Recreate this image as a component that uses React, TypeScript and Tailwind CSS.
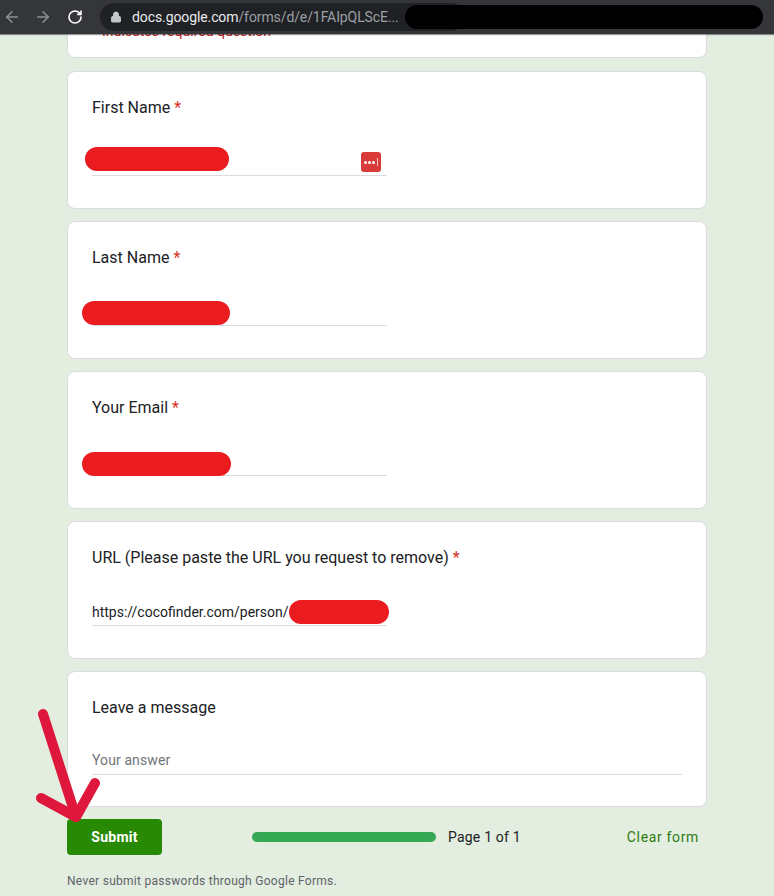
import React from "react";
import { ArrowLeft, ArrowRight, RotateCw, Lock } from "lucide-react";

function Blob({ className }: { className: string }) {
  return <div className={"absolute h-6 rounded-full bg-[#ea1c1f] " + className} />;
}

function Question({ title, required, children, last }: { title: string; required?: boolean; children: React.ReactNode; last?: boolean }) {
  return (
    <section className={"rounded-lg border border-[#dadce0] bg-white px-6 pt-6 " + (last ? "h-[136px]" : "h-[138px]")}>
      <div className="h-6 text-base leading-6 text-[#202124]">
        {title}
        {required && <span className="text-[#d93025]"> *</span>}
      </div>
      {children}
    </section>
  );
}

function Line({ children, wide }: { children?: React.ReactNode; wide?: boolean }) {
  return (
    <div className={"relative mt-[18px] border-b border-[#dadce0] " + (wide ? "h-[37px] w-[590px]" : "h-[38px] w-[295px]")}>
      {children}
    </div>
  );
}

export default function App() {
  return (
    <div className="relative flex h-[896px] w-[774px] flex-col overflow-hidden bg-[#e3ede0] font-['Roboto',sans-serif]">
      <header className="z-10 flex h-[34px] shrink-0 items-center bg-[#35363a] shadow-[0_1px_1px_rgba(0,0,0,0.4)]">
        <div className="flex w-[100px] items-center pl-[3px]">
          <ArrowLeft size={18} className="text-[#8f9195]" />
          <ArrowRight size={18} className="ml-[13px] text-[#8f9195]" />
          <RotateCw size={16} className="ml-[15px] text-white" strokeWidth={2.4} />
        </div>
        <div className="relative flex h-[28px] w-[365px] items-center rounded-full bg-[#202124] pl-[10px]">
          <Lock size={12} className="text-[#c4c6ca]" fill="#c4c6ca" />
          <div className="ml-[10px] whitespace-nowrap text-[14px] tracking-[-0.1px] text-[#9aa0a6]">
            <span className="text-[#e8eaed]">docs.google.com</span>/forms/d/e/1FAIpQLScE...
          </div>
        </div>
      </header>
      <div className="absolute left-[405px] top-[5px] z-20 h-[24px] w-[358px] rounded-full bg-black" />

      <main className="ml-[67px] flex w-[640px] flex-col">
        <div className="relative mb-[13px] h-[24px] overflow-hidden rounded-b-lg border-b border-x border-[#dadce0] bg-white">
          <div className="absolute left-[34px] top-[-13px] text-[14px] leading-5 text-[#c5221f]">Indicates required question</div>
        </div>

        <div className="flex flex-col gap-3">
          <Question title="First Name" required>
            <Line>
              <Blob className="left-[-7px] top-[9px] w-[144px]" />
              <div className="absolute left-[269px] top-[14px] flex h-5 w-5 items-center justify-center gap-[1px] rounded-[3px] bg-[#d93a3a]">
                <i className="h-[3px] w-[3px] rounded-full bg-white" />
                <i className="h-[3px] w-[3px] rounded-full bg-white" />
                <i className="h-[3px] w-[3px] rounded-full bg-white" />
                <i className="ml-[1px] h-[8px] w-[1.5px] bg-[#f4c7c7]" />
              </div>
            </Line>
          </Question>
          <Question title="Last Name" required>
            <Line>
              <Blob className="left-[-10px] top-[13px] w-[148px]" />
            </Line>
          </Question>
          <Question title="Your Email" required>
            <Line>
              <Blob className="left-[-10px] top-[14px] w-[149px]" />
            </Line>
          </Question>
          <Question title="URL (Please paste the URL you request to remove)" required>
            <Line>
              <div className="pt-[14px] text-sm leading-5 text-[#202124]">https://cocofinder.com/person/</div>
              <Blob className="left-[197px] top-[12px] w-[100px]" />
            </Line>
          </Question>
          <Question title="Leave a message" last>
            <Line wide>
              <div className="pt-[12px] text-sm leading-5 tracking-[0.1px] text-[#70757a]">Your answer</div>
            </Line>
          </Question>
        </div>

        <div className="mt-3 flex h-9 items-center">
          <button className="h-9 w-[95px] rounded bg-[#288a04] text-sm font-bold tracking-[0.25px] text-white">Submit</button>
          <div className="ml-[90px] h-[10px] w-[184px] rounded-full bg-[#34a853]" />
          <div className="ml-3 text-sm tracking-[0.2px] text-[#202124]">Page 1 of 1</div>
          <div className="ml-auto mr-2 text-sm tracking-[0.65px] text-[#2f7d12]">Clear form</div>
        </div>

        <div className="mt-[18px] text-xs leading-4 tracking-[0.28px] text-[#5f6368]">Never submit passwords through Google Forms.</div>
      </main>

      <svg className="absolute left-[30px] top-[700px] z-20" width="80" height="130" viewBox="0 0 80 130" fill="none" stroke="#e0173c" strokeWidth="10" strokeLinecap="round" strokeLinejoin="round">
        <path d="M13 14 L46 117" />
        <path d="M11 98 L46 117 L65 83" />
      </svg>
    </div>
  );
}
